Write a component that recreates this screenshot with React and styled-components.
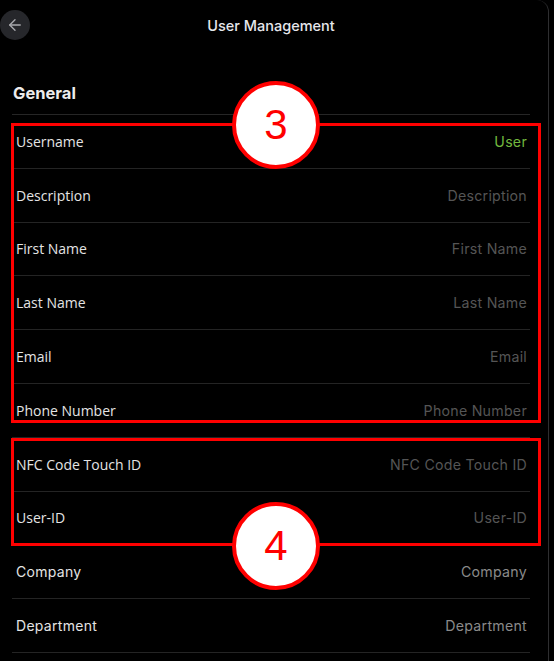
import React from "react";
import styled, { createGlobalStyle, css } from "styled-components";
import { ArrowLeft } from "lucide-react";

const fields = [
  { label: "Username", value: "User", highlight: true },
  { label: "Description", value: "Description" },
  { label: "First Name", value: "First Name" },
  { label: "Last Name", value: "Last Name" },
  { label: "Email", value: "Email" },
  { label: "Phone Number", value: "Phone Number" },
  { label: "NFC Code Touch ID", value: "NFC Code Touch ID" },
  { label: "User-ID", value: "User-ID" },
  { label: "Company", value: "Company", geo: true },
  { label: "Department", value: "Department", geo: true },
];

const App = () => {
  return (
    <>
      <GlobalStyle />
      <Frame>
        <Header>
          <BackButton aria-label="Back">
            <ArrowLeft size={18} strokeWidth={1.8} />
          </BackButton>
          <Title>User Management</Title>
          <span />
        </Header>

        <SectionTitle>General</SectionTitle>

        <List>
          {fields.map((f) => (
            <Row key={f.label}>
              <Label $geo={f.geo}>{f.label}</Label>
              <Value $highlight={f.highlight} $geo={f.geo}>
                {f.value}
              </Value>
            </Row>
          ))}
        </List>

        {/* review annotations laid over the form */}
        <Callout $top={123} $height={300}>
          <Marker $place="top">3</Marker>
        </Callout>
        <Callout $top={438} $height={108}>
          <Marker $place="bottom">4</Marker>
        </Callout>
      </Frame>
    </>
  );
};

export default App;

const GlobalStyle = createGlobalStyle`
  body {
    margin: 0;
    background: #000;
    font-family: "Open Sans", "Noto Sans", sans-serif;
  }
`;

const Frame = styled.div`
  position: relative;
  width: 549px;
  height: 661px;
  background: #000;
  border-right: 1px solid #2e2e30;
  border-top-right-radius: 12px;
  overflow: hidden;
  padding: 0 18px 0 12px;
  box-sizing: border-box;
`;

const Header = styled.div`
  height: 50px;
  margin-left: -12px;
  display: grid;
  grid-template-columns: 30px 1fr 30px;
  align-items: center;
`;

const BackButton = styled.button`
  width: 30px;
  height: 30px;
  border-radius: 50%;
  border: none;
  background: #26272b;
  color: #a9aaae;
  display: flex;
  align-items: center;
  justify-content: center;
  padding: 0;
`;

const Title = styled.div`
  text-align: center;
  font-family: "Inter", sans-serif;
  font-size: 14.5px;
  font-weight: 500;
  color: #e6e7ec;
  margin-left: 12px;
`;

const SectionTitle = styled.div`
  margin-top: 32px;
  padding: 0 0 10px 1px;
  line-height: 22px;
  font-family: "Inter", sans-serif;
  font-size: 16.5px;
  font-weight: 700;
  color: #ececec;
  border-bottom: 1px solid #262626;
`;

const List = styled.div`
  display: flex;
  flex-direction: column;
`;

const Row = styled.div`
  height: 52.8px;
  display: flex;
  align-items: center;
  justify-content: space-between;
  padding: 0 3px 0 4px;
  border-bottom: 1px solid #242424;
`;

const Label = styled.span`
  font-size: 14px;
  color: #e4e4e4;
  ${(p) =>
    p.$geo
      ? css`
          font-family: "Inter", sans-serif;
          font-weight: 400;
          font-size: 14px;
          letter-spacing: 0.3px;
        `
      : css`
          font-family: "Open Sans", sans-serif;
        `}
`;

const Value = styled.span`
  font-family: "Inter", sans-serif;
  font-size: 14.2px;
  letter-spacing: 0.25px;
  color: ${(p) => (p.$highlight ? "#72b83f" : p.$geo ? "#8a8a8a" : "#555555")};
`;

const Callout = styled.div`
  position: absolute;
  left: 11px;
  top: ${(p) => p.$top}px;
  width: 530px;
  height: ${(p) => p.$height}px;
  border: 3px solid #ff0000;
  box-sizing: border-box;
  pointer-events: none;
`;

const Marker = styled.div`
  position: absolute;
  left: 50%;
  ${(p) => (p.$place === "top" ? "top: -1px;" : "bottom: -3px;")}
  transform: translate(-50%, ${(p) => (p.$place === "top" ? "-50%" : "50%")});
  width: 88px;
  height: 88px;
  border-radius: 50%;
  border: 4px solid #ff0000;
  background: #fff;
  box-sizing: border-box;
  display: flex;
  align-items: center;
  justify-content: center;
  font-family: "Liberation Sans", sans-serif;
  font-size: 42px;
  color: #ff0000;
`;
